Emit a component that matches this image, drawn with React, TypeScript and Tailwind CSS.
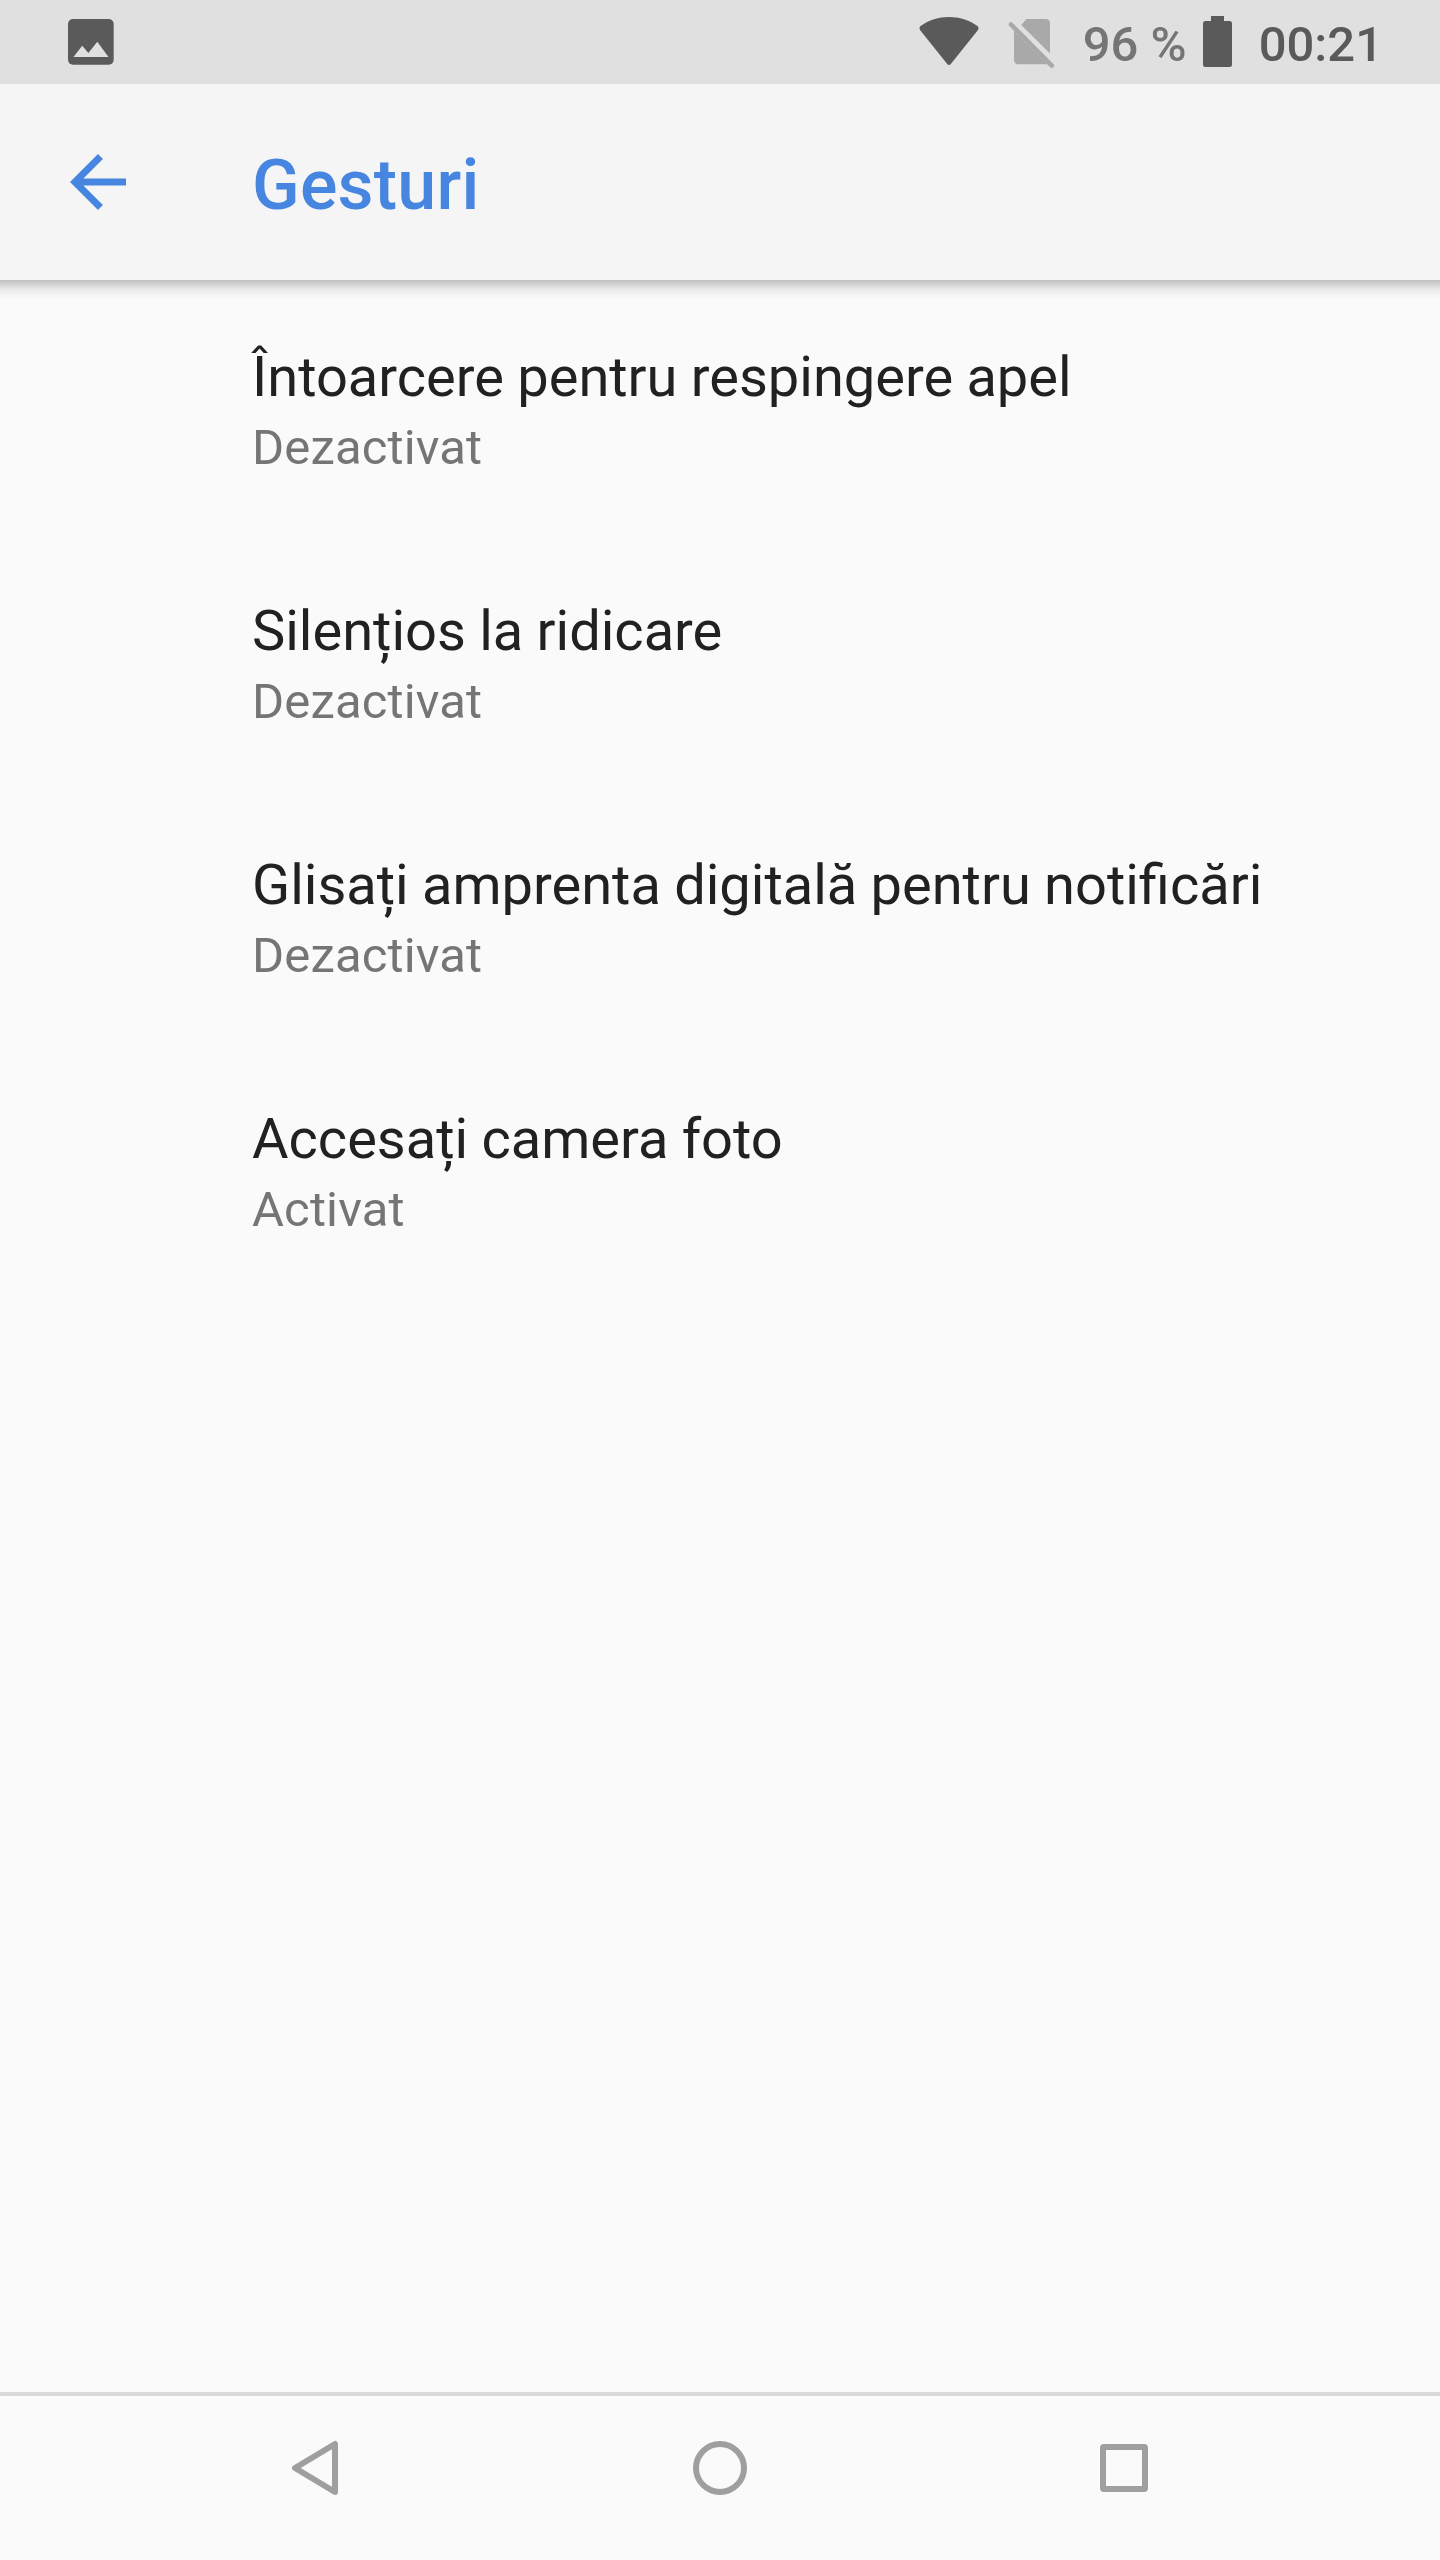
import type { ReactNode } from 'react'

interface Gesture {
  title: string
  status: string
}

const gestures: Gesture[] = [
  { title: 'Întoarcere pentru respingere apel', status: 'Dezactivat' },
  { title: 'Silențios la ridicare', status: 'Dezactivat' },
  { title: 'Glisați amprenta digitală pentru notificări', status: 'Dezactivat' },
  { title: 'Accesați camera foto', status: 'Activat' },
]

function StatusBar() {
  return (
    <div className="flex h-[84px] shrink-0 items-start bg-[#e0e0e0] text-[49px] leading-[58px] text-[#5a5a5a]">
      {/* screenshot notification */}
      <svg className="ml-[68px] mt-[19px] h-[46px] w-[46px]" viewBox="0 0 46 46">
        <rect width="45.7" height="45.7" rx="5" fill="#5a5a5a" />
        <path d="M5.5 38L14.2 26.8L20.4 34L29.3 22.8L40.5 38Z" fill="#e0e0e0" />
      </svg>

      <div className="ml-auto flex items-start">
        {/* wifi */}
        <svg className="mt-[16px] h-[50px] w-[60px]" viewBox="0 0 60 50" fill="#5a5a5a">
          <path d="M1.5 10C10 4 19.500 1 30 1S50 4 58.500 10Q60.200 11.800 59 14L32 47.800Q30 50.200 28 47.800L1 14Q-.2 11.800 1.500 10Z" />
        </svg>

        {/* no sim */}
        <svg className="ml-[29px] mt-[18px] h-[52px] w-[48px]" viewBox="0 0 48 52" fill="#a9a9a9">
          <path d="M18.500 1H37.500Q42 1 42 5.500V35.500L13.200 7Z" />
          <path d="M6 12.800L39.500 46.300H10.500Q6 46.300 6 41.800Z" />
          <path d="M3 6.500L43.800 47.600" stroke="#a9a9a9" strokeWidth="4.600" strokeLinecap="round" />
        </svg>

        <span className="ml-[27px] mt-[16px] font-medium text-[#757575]">96 %</span>

        {/* battery */}
        <svg className="ml-[16px] mt-[16px] h-[51px] w-[29px]" viewBox="0 0 29 51" fill="#5a5a5a">
          <rect x="8" width="13" height="8" />
          <rect y="5" width="29" height="46" rx="2.500" />
        </svg>

        <span className="ml-[27px] mr-[57px] mt-[16px] font-medium">00:21</span>
      </div>
    </div>
  )
}

function Toolbar() {
  return (
    <header className="flex h-[196px] shrink-0 items-start bg-[#f5f5f5]">
      <button className="ml-[56px] mt-[56px]" aria-label="Înapoi">
        <svg className="h-[84px] w-[84px]" viewBox="0 0 24 24" fill="#4686e0">
          <path d="M20 11H7.830l5.590-5.590L12 4l-8 8 8 8 1.410-1.410L7.830 13H20v-2z" />
        </svg>
      </button>
      <h1 className="ml-[112px] mt-[60px] text-[70px] font-medium leading-[82px] tracking-[0.2px] text-[#4686e0]">
        Gesturi
      </h1>
    </header>
  )
}

function GestureRow({ title, status }: Gesture) {
  return (
    <li className="h-[254px] pl-[252px]">
      <div className="whitespace-nowrap text-[56px] leading-[66px] text-[#212121] [word-spacing:-0.6px]">
        {title}
      </div>
      <div className="mt-[9px] text-[49px] leading-[58px] tracking-[0.15px] text-[#757575]">
        {status}
      </div>
    </li>
  )
}

function NavButton({ label, children }: { label: string; children: ReactNode }) {
  return (
    <button aria-label={label}>
      <svg
        className="h-[60px] w-[60px]"
        viewBox="0 0 60 60"
        fill="none"
        stroke="#9f9f9f"
        strokeWidth="6"
        strokeLinejoin="round"
      >
        {children}
      </svg>
    </button>
  )
}

function NavBar() {
  return (
    <nav className="flex h-[168px] shrink-0 items-start justify-between border-t-4 border-[#dadada] pl-[285px] pr-[286px] pt-[42px]">
      <NavButton label="Înapoi">
        <path d="M10 30L50 6V54Z" />
      </NavButton>
      <NavButton label="Acasă">
        <circle cx="30" cy="30" r="24" />
      </NavButton>
      <NavButton label="Recente">
        <rect x="9" y="9" width="42" height="42" rx="1" />
      </NavButton>
    </nav>
  )
}

export default function App() {
  return (
    <div className="flex h-[2560px] w-[1440px] flex-col overflow-hidden bg-[#fafafa] font-[Roboto,sans-serif]">
      <StatusBar />
      <Toolbar />
      {/* toolbar shadow */}
      <div className="h-[20px] shrink-0 bg-linear-to-b from-[#bfbfbf] via-[#e8e8e8] via-45% to-[#fafafa] to-90%" />
      <ul className="grow pt-[44px]">
        {gestures.map((g) => (
          <GestureRow key={g.title} {...g} />
        ))}
      </ul>
      <NavBar />
    </div>
  )
}
